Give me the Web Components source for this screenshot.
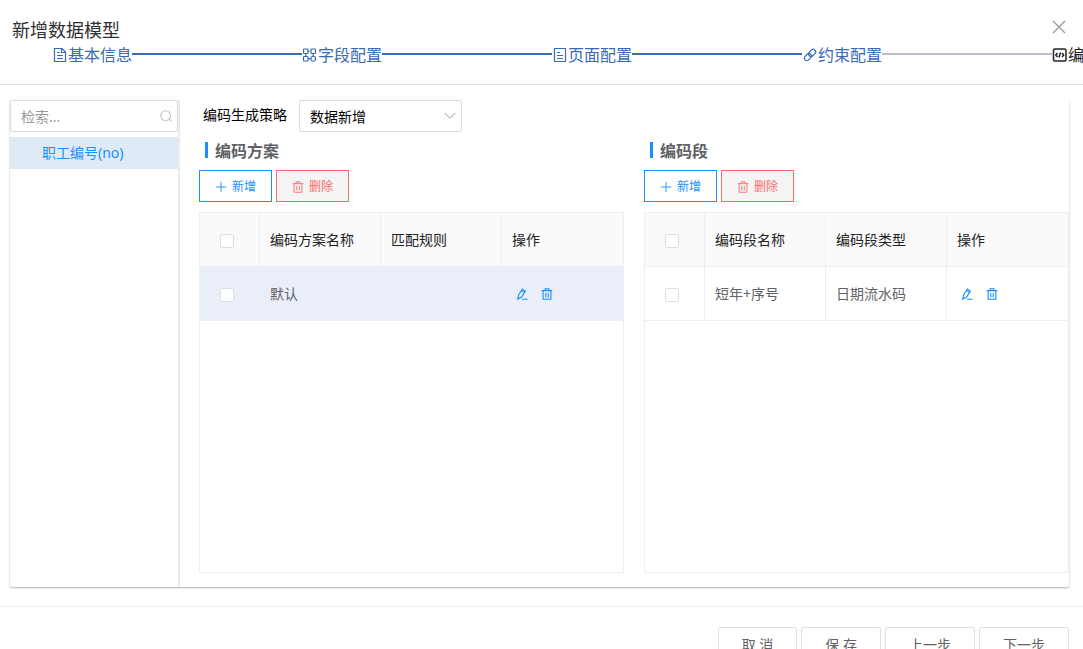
<!DOCTYPE html>
<html lang="zh-CN">
<head>
<meta charset="utf-8">
<title>新增数据模型</title>
<style>
  html, body { margin: 0; height: 100%; overflow: hidden; background: #fff; }
  body { font-family: "Noto Sans", "Noto Sans CJK SC", sans-serif; font-size: 14px; color: #606266; }
</style>
</head>
<body>
<model-dialog></model-dialog>

<script>
const define = (name, html, setup) => {
  const template = document.createElement('template');
  template.innerHTML = '<style>:host,*{box-sizing:border-box}</style>' + html;
  customElements.define(name, class extends HTMLElement {
    constructor() {
      super();
      this.attachShadow({ mode: 'open' }).append(template.content.cloneNode(true));
    }
    connectedCallback() {
      if (setup && !this.ready) { this.ready = true; setup(this, this.shadowRoot); }
    }
  });
};

const ICONS = {
  close: '<path d="M2 2l12 12M14 2L2 14"/>',
  doc: '<path d="M2.500 1.500h7.500l3.500 3.500v9.500h-11zM9.500 1.500v4h4M5 5.500h2.500M5 8.500h6M5 11.500h6"/>',
  grid: '<rect x="1.500" y="2" width="4.500" height="4.500" rx=".8"/><rect x="9" y="2" width="4.500" height="4.500" rx=".8"/><rect x="1.500" y="9.500" width="4.500" height="4.500" rx=".8"/><rect x="9" y="9.500" width="4.500" height="4.500" rx="1.500"/><path d="M3.800 6.500v3M11.200 6.500v3M6 4.300h1.500M6 11.700h3"/>',
  page: '<path d="M2.500 1.500h11v13h-11zM5 5.500h3M5 8.500h6M5 11.500h6"/>',
  link: '<g transform="rotate(-45 8 8)"><rect x="1" y="5.500" width="8" height="5" rx="2.500"/><rect x="7" y="5.500" width="8" height="5" rx="2.500"/></g>',
  code: '<g stroke-width="1.500"><rect x="1.500" y="2" width="12.500" height="12" rx="1.500"/><path d="M5.500 6L3.800 8l1.700 2M10 6l1.700 2L10 10M8.600 5.500l-1.700 5"/></g>',
  search: '<circle cx="7.500" cy="7.500" r="6.500"/><path d="M12 12l3 3"/>',
  down: '<path d="M1 4l7 7 7-7"/>',
  plus: '<path d="M8 1v14M1 8h14"/>',
  trash: '<path d="M1 3.500h14M5.500 3.500v-2.500h5v2.500M2.800 3.500v11.500h10.400v-11.500M6.300 6.500v6M9.700 6.500v6"/>',
  edit: '<path d="M3.500 9L8.500 1.500l4 2.600-5 7.900-5 2.500zM7.300 3.300l4 2.600M1 15h2M8 15h7.500"/>'
};

define('ui-icon', `
  <style>
    :host { display: inline-block; flex: none; width: 16px; height: 16px; }
    svg { display: block; width: 100%; height: 100%; fill: none; stroke: currentColor; stroke-width: var(--stroke, 1.2); }
  </style>
  <svg viewBox="0 0 16 16" aria-hidden="true"></svg>`,
  (el, root) => { root.querySelector('svg').innerHTML = ICONS[el.getAttribute('name')]; });

define('step-item', `
  <style>
    :host { display: flex; align-items: center; flex: 0 0 250px; height: 24px; font-size: 16px; line-height: 22px; color: #3a69b5; --line: #3a69b5; }
    :host([state="next"]) { --line: #b9c0cc; }
    :host([state="todo"]) { color: #222; --line: #b9c0cc; }
    .name { display: flex; align-items: center; padding-top: 2px; white-space: nowrap; }
    i { flex: 1; height: 2px; background: var(--line); }
  </style>
  <span class="name"><ui-icon></ui-icon><slot></slot></span><i></i>`,
  (el, root) => {
    const icon = document.createElement('ui-icon');
    icon.setAttribute('name', el.getAttribute('icon'));
    root.querySelector('ui-icon').replaceWith(icon);
  });

define('step-bar', `
  <style>:host { display: flex; padding-left: 52px; overflow: hidden; }</style>
  <slot></slot>`);

define('tool-button', `
  <style>
    :host { display: inline-block; }
    button { display: flex; align-items: center; gap: 5px; height: 32px; padding: 1px 15px 0; font: inherit; font-size: 12px; line-height: 16px;
      color: #1890ff; background: #fff; border: 1px solid currentColor; border-radius: 0; cursor: pointer; }
    :host([kind="danger"]) button { color: #f56c6c; background: #f4f4f5; }
    ui-icon { width: 12px; height: 12px; }
  </style>
  <button type="button"><ui-icon></ui-icon><slot></slot></button>`,
  (el, root) => {
    const icon = document.createElement('ui-icon');
    icon.setAttribute('name', el.getAttribute('icon'));
    root.querySelector('ui-icon').replaceWith(icon);
  });

define('foot-button', `
  <style>
    :host { display: inline-block; }
    button { height: 36px; padding: 0 23px; font: inherit; font-size: 14px; line-height: 20px; color: #606266;
      background: #fff; border: 1px solid #dcdfe6; border-radius: 2px; cursor: pointer; white-space: nowrap; }
  </style>
  <button type="button"><slot></slot></button>`);

define('field-list', `
  <style>
    :host { display: block; flex: 0 0 170px; min-width: 0; border-right: 2px solid #ebebeb; }
    .search { display: flex; align-items: center; height: 32px; padding: 0 5px 0 10px; border: 1px solid #dcdcdc; border-radius: 2px; color: #c0c4cc; --stroke: 1.5; }
    input { flex: 1; width: 0; min-width: 0; height: 30px; padding: 0; border: 0; outline: 0; background: none; font: inherit; color: #606266; }
    input::placeholder { color: #999; opacity: 1; }
    ui-icon { width: 12px; height: 12px; }
    ul { list-style: none; margin: 5px 0 0; padding: 0; }
    a { display: block; padding-left: 32px; line-height: 32px; color: #1890ff; background: #deeaf6; text-decoration: none; }
  </style>
  <div class="search"><input type="text" placeholder="检索..." aria-label="检索"><ui-icon name="search"></ui-icon></div>
  <ul><li><a href="#no">职工编号(no)</a></li></ul>`);

define('strategy-select', `
  <style>
    :host { display: flex; align-items: center; gap: 12px; padding-left: 4px; color: #000; }
    .box { display: grid; align-items: center; width: 163px; }
    select, ui-icon { grid-area: 1 / 1; }
    select { appearance: none; width: 100%; height: 32px; padding: 0 30px 0 10px; border: 1px solid #dcdcdc; border-radius: 2px;
      background: #fff; font: inherit; color: #000; }
    ui-icon { justify-self: end; width: 12px; height: 12px; margin-right: 6px; color: #c0c4cc; pointer-events: none; --stroke: 1.6; }
    label { line-height: 18px; padding-bottom: 2px; }
  </style>
  <label for="strategy">编码生成策略</label>
  <div class="box">
    <select id="strategy"><option>数据新增</option></select>
    <ui-icon name="down"></ui-icon>
  </div>`);

define('data-grid', `
  <style>
    :host { display: block; min-height: calc(100vh - 288px); border: 1px solid #ebeef5; }
    table { width: 100%; table-layout: fixed; border-collapse: separate; border-spacing: 0; }
    th, td { height: 54px; padding: 0 0 0 10px; text-align: left; font-weight: 400; line-height: 20px; border: 0 solid #ebeef8; border-width: 0 1px 1px 0; }
    th { background: #fafafa; color: #222; }
    th:first-child, td:first-child { width: 60px; padding: 2px 0 0 20px; }
    th:last-child, td:last-child { border-right-width: 0; }
    .current td { background: #eaeef8; }
    input { appearance: none; display: block; width: 14px; height: 14px; margin: 0; background: #fff; border: 1px solid #dcdfe6; border-radius: 2px; }
    .ops { display: flex; gap: 5px; --stroke: 1.5; }
    .ops button { display: flex; justify-content: center; width: 20px; padding: 0; border: 0; background: none; color: #1890ff; cursor: pointer; }
    .ops ui-icon { width: 12px; height: 12px; }
  </style>
  <table><thead><tr></tr></thead><tbody><tr></tr></tbody></table>`,
  (el, root) => {
    const [head, row] = root.querySelectorAll('tr');
    const columns = el.getAttribute('columns').split(',');
    const values = el.getAttribute('values').split(',');
    head.innerHTML = '<th scope="col"><input type="checkbox" aria-label="全选"></th>' +
      columns.map(c => `<th scope="col">${c}</th>`).join('') + '<th scope="col">操作</th>';
    row.innerHTML = '<td><input type="checkbox" aria-label="选择"></td>' +
      values.map(v => `<td>${v}</td>`).join('') +
      '<td><div class="ops"><button type="button" aria-label="编辑"><ui-icon name="edit"></ui-icon></button>' +
      '<button type="button" aria-label="删除"><ui-icon name="trash"></ui-icon></button></div></td>';
    row.classList.toggle('current', el.hasAttribute('current'));
  });

define('grid-section', `
  <style>
    :host { display: block; min-width: 0; }
    h2 { display: flex; align-items: center; gap: 7px; margin: 8px 0 10px; height: 20px; padding-left: 6px; font-size: 16px; line-height: 20px; font-weight: 700; color: #606266; }
    h2::before { content: ""; width: 3px; height: 16px; background: #1890ff; }
    h2 span { padding-top: 2px; }
    .tools { display: flex; gap: 4px; margin-bottom: 10px; }
  </style>
  <h2><span><slot name="title"></slot></span></h2>
  <div class="tools">
    <tool-button icon="plus">新增</tool-button>
    <tool-button icon="trash" kind="danger">删除</tool-button>
  </div>
  <slot></slot>`);

define('model-dialog', `
  <style>
    :host { display: block; overflow: hidden; }
    header { padding: 17px 0 18px; border-bottom: 1px solid #e0e0e0; }
    .top { display: flex; justify-content: space-between; align-items: flex-start; height: 25px; padding: 0 14px 0 12px; }
    h1 { margin: 0; font-size: 18px; line-height: 26px; font-weight: 400; color: #303133; }
    .close { display: grid; place-items: center; width: 20px; height: 20px; padding: 0; border: 0; background: none; color: #909399; cursor: pointer; }
    main { display: flex; margin: 15px 14px 0 10px; border-radius: 2px; box-shadow: 0 1px 2px rgba(0, 0, 0, .3); }
    .work { flex: 1; min-width: 0; padding: 0 0 14px 19px; }
    .pair { display: grid; grid-template-columns: 1fr 1fr; gap: 20px; }
    footer { display: flex; justify-content: flex-end; gap: 4px; margin-top: 19px; padding: 20px 14px; border-top: 1px solid #ebeef5; }
  </style>
  <header>
    <div class="top">
      <h1>新增数据模型</h1>
      <button class="close" type="button" aria-label="关闭"><ui-icon name="close"></ui-icon></button>
    </div>
    <step-bar>
      <step-item icon="doc">基本信息</step-item>
      <step-item icon="grid">字段配置</step-item>
      <step-item icon="page">页面配置</step-item>
      <step-item icon="link" state="next">约束配置</step-item>
      <step-item icon="code" state="todo">编码配置</step-item>
    </step-bar>
  </header>
  <main>
    <field-list></field-list>
    <div class="work">
      <strategy-select></strategy-select>
      <div class="pair">
        <grid-section>
          <span slot="title">编码方案</span>
          <data-grid columns="编码方案名称,匹配规则" values="默认," current></data-grid>
        </grid-section>
        <grid-section>
          <span slot="title">编码段</span>
          <data-grid columns="编码段名称,编码段类型" values="短年+序号,日期流水码"></data-grid>
        </grid-section>
      </div>
    </div>
  </main>
  <footer>
    <foot-button>取 消</foot-button>
    <foot-button>保 存</foot-button>
    <foot-button>上一步</foot-button>
    <foot-button>下一步</foot-button>
  </footer>`);
</script>
</body>
</html>
